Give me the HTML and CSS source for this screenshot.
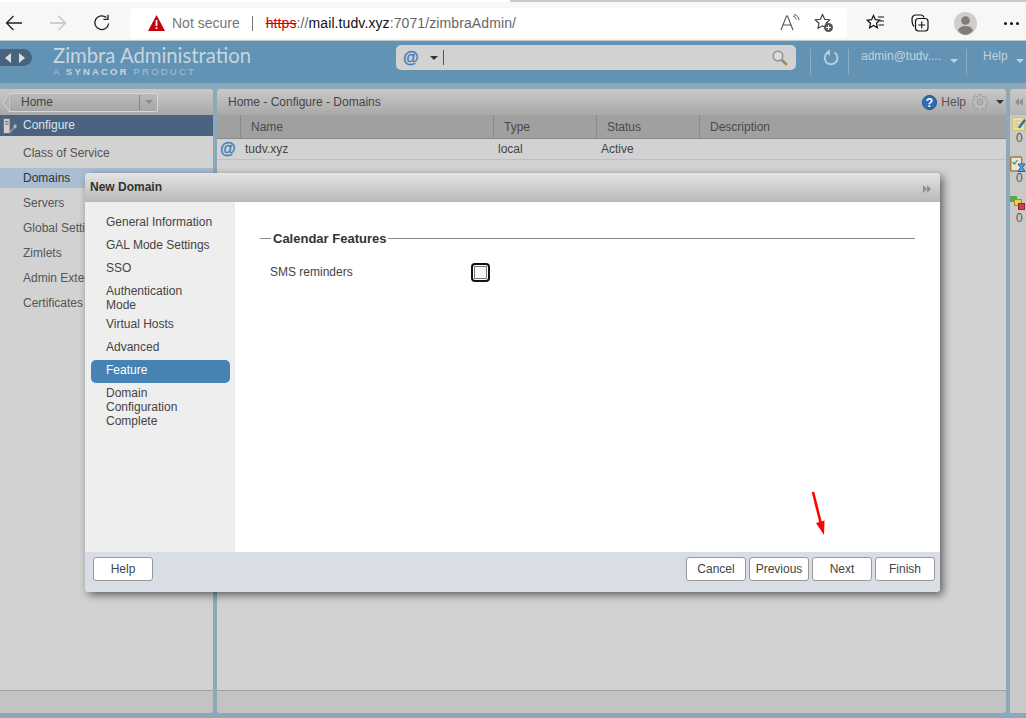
FILE: index.html
```html
<!DOCTYPE html>
<html lang="en">
<head>
<meta charset="utf-8">
<title>Zimbra Administration</title>
<link rel="stylesheet" href="styles.css">
</head>
<body>
<div class="browser">
  <div class="tabstrip"><div class="tabedge"></div></div>
  <div class="toolbar">
    <svg class="tb-icon back" width="18" height="18" viewBox="0 0 18 18"><path d="M17 9H1.5M8.500 2L1.5 9l7 7" fill="none" stroke="#222" stroke-width="1.3"/></svg>
    <svg class="tb-icon fwd" width="18" height="18" viewBox="0 0 18 18"><path d="M1 9h15.500M9.500 2l7 7-7 7" fill="none" stroke="#c4c4c4" stroke-width="1.3"/></svg>
    <svg class="tb-icon reload" width="18" height="18" viewBox="0 0 18 18"><path d="M15.600 9.500A6.900 6.900 0 1 1 13.400 3.600" fill="none" stroke="#222" stroke-width="1.3"/><path d="M15 .8v4.600h-4.600" fill="none" stroke="#222" stroke-width="1.3"/></svg>
    <div class="addr">
      <svg class="warn" width="17" height="16" viewBox="0 0 17 16"><path d="M8.500 0L17 16H0z" fill="#c5000f"/><path d="M7.600 5h1.800v6H7.600zM7.600 12.200h1.800V14H7.600z" fill="#fff"/></svg>
      <span class="notsecure">Not secure</span>
      <span class="addr-sep"></span>
      <span class="url"><span class="proto">https</span><span class="dim">://</span>mail.tudv.xyz<span class="dim">:7071/zimbraAdmin/</span></span>
      <svg class="readaloud" width="22" height="18" viewBox="0 0 22 18"><path d="M2 16L7.500 2h1L14 16M4 11h8" fill="none" stroke="#555" stroke-width="1.100"/><path d="M14 2c2 .6 3 1.800 3 3.500M15 .5c3 .6 5 3 5 5.500" fill="none" stroke="#555" stroke-width="1"/></svg>
      <svg class="addfav" width="20" height="20" viewBox="0 0 20 20"><path d="M8.500 1.500l2.200 4.700 5 .6-3.700 3.500 1 5-4.500-2.500-4.500 2.500 1-5L1.300 6.800l5-.6z" fill="none" stroke="#333" stroke-width="1.100"/><circle cx="14.500" cy="14.500" r="4.500" fill="#555"/><path d="M12 14.500h5M14.500 12v5" stroke="#fff" stroke-width="1.100"/></svg>
    </div>
    <svg class="favs" width="20" height="18" viewBox="0 0 20 18"><path d="M7.500 1.500l1.900 4.200 4.400.5-3.300 3 .9 4.500-3.900-2.300-3.900 2.300.9-4.500-3.300-3 4.400-.5z" fill="none" stroke="#111" stroke-width="1.200"/><path d="M12 3h6M14 7h4M12.500 11h5.500" stroke="#111" stroke-width="1.100"/></svg>
    <svg class="colls" width="18" height="18" viewBox="0 0 18 18"><rect x="4.500" y="4.500" width="12.500" height="12.500" rx="3" fill="none" stroke="#111" stroke-width="1.200"/><path d="M10.700 7.500v7M7.200 11h7" stroke="#111" stroke-width="1.100"/><path d="M3 12.500C1.500 11 1 9.500 1 5c0-2 1-4 4-4h5c1.500 0 2.500.8 3 2.500" fill="none" stroke="#111" stroke-width="1.200"/></svg>
    <svg class="avatar" width="23" height="23" viewBox="0 0 23 23"><circle cx="11.500" cy="11.500" r="11.500" fill="#d0cdca"/><circle cx="11.500" cy="8.500" r="4.300" fill="#807d7a"/><path d="M4 18.500c1-3.200 3.600-4.500 7.500-4.500s6.500 1.300 7.500 4.500A11 11 0 0 1 11.500 23 11 11 0 0 1 4 18.500z" fill="#807d7a"/></svg>
    <span class="dots"><i></i><i></i><i></i></span>
  </div>
</div>

<div class="app">
  <header class="apphead">
    <div class="navpill"><span class="tri-l"></span><span class="tri-r"></span></div>
    <div class="brand">
      <div class="brand-main">Zimbra Administration</div>
      <div class="brand-sub">A <b>SYNACOR</b> PRODUCT</div>
    </div>
    <div class="search">
      <span class="at search-at">@</span>
      <span class="caret dark search-caret"></span>
      <span class="search-sep"></span>
      <svg class="lens" width="16" height="16" viewBox="0 0 16 16"><circle cx="6" cy="6" r="4.800" fill="#dcdcdc" stroke="#87949a" stroke-width="1.500"/><path d="M9.800 9.800l5 5" stroke="#a98443" stroke-width="2.600"/></svg>
    </div>
    <span class="hsep sep1"></span>
    <svg class="refresh" width="16" height="17" viewBox="0 0 16 17"><path d="M4.300 3.800A6.400 6.400 0 1 0 11.400 3.500" fill="none" stroke="#b8cfdc" stroke-width="2"/><path d="M7 .3v6.400L2.600 3.400z" fill="#b8cfdc"/></svg>
    <span class="hsep sep2"></span>
    <span class="user">admin@tudv....</span>
    <span class="caret light user-caret"></span>
    <span class="hsep sep3"></span>
    <span class="headhelp">Help</span>
    <span class="caret light help-caret"></span>
  </header>

  <div class="panels">
    <aside class="side">
      <div class="panelhead">
        <div class="homebtn">
          <svg class="hometip" width="8" height="19" viewBox="0 0 8 19"><path d="M8 .5H7L1 9.500 7 18.500h1z" fill="#b4b4b4" stroke="#d6d6d6"/></svg>
          <span class="homelabel">Home</span><span class="homedrop"><span class="caret gray"></span></span>
        </div>
      </div>
      <div class="section">
        <svg class="cfg-icon" width="18" height="17" viewBox="0 0 18 17"><rect x="3.500" y="1.500" width="6.500" height="15" fill="#cfcfcf" stroke="#6f6f6f"/><path d="M5 4.500h3.500M5 7h3.500" stroke="#666"/><path d="M9 15.500l4.500-5 .3-2.500 2.700-1-.7 2.200 1.200.4-1.700 1.800-1.500-.3-3.500 4.800z" fill="#c4c4c4" stroke="#8b8b8b" stroke-width=".7"/></svg>
        <span>Configure</span>
      </div>
      <ul class="sidelist">
        <li>Class of Service</li>
        <li class="on">Domains</li>
        <li>Servers</li>
        <li>Global Settings</li>
        <li>Zimlets</li>
        <li>Admin Extensions</li>
        <li>Certificates</li>
      </ul>
      <div class="panelfoot"></div>
    </aside>

    <main class="content">
      <div class="panelhead crumbs">
        <span class="crumbtext">Home - Configure - Domains</span>
        <svg class="qmark" width="15" height="15" viewBox="0 0 15 15"><circle cx="7.500" cy="7.500" r="7" fill="#2e6db0" stroke="#1d4f8c"/><text x="7.500" y="11.500" class="qtext" text-anchor="middle">?</text></svg>
        <span class="crumbhelp">Help</span>
        <svg class="gear" width="16" height="16" viewBox="0 0 16 16"><path d="M6.800 .5h2.400l.4 2 1.500.6 1.700-1.100 1.700 1.700-1.100 1.700.6 1.500 2 .4v2.400l-2 .4-.6 1.500 1.100 1.700-1.700 1.700-1.700-1.100-1.500.6-.4 2H6.800l-.4-2-1.500-.6-1.700 1.100-1.700-1.700 1.100-1.700-.6-1.500-2-.4V6.800l2-.4.6-1.500L1.500 3.200l1.700-1.700 1.700 1.100 1.500-.6z" fill="#bdbdbd" stroke="#9d9d9d"/><circle cx="8" cy="8" r="3" fill="#b0b0b0" stroke="#9a9a9a"/></svg>
        <span class="caret dark crumb-caret"></span>
      </div>
      <div class="thead">
        <span class="col c0"></span>
        <span class="col c1">Name</span>
        <span class="col c2">Type</span>
        <span class="col c3">Status</span>
        <span class="col c4">Description</span>
      </div>
      <div class="trow">
        <span class="cell c0"><span class="at row-at">@</span></span>
        <span class="cell c1">tudv.xyz</span>
        <span class="cell c2">local</span>
        <span class="cell c3">Active</span>
      </div>
      <div class="content-fill"></div>
      <div class="panelfoot"></div>
    </main>

    <aside class="mini">
      <div class="minihead"><span class="tri-l gray"></span><span class="tri-l gray"></span></div>
      <div class="ministat">
        <svg width="16" height="16" viewBox="0 0 16 16"><rect x="2.500" y="1.500" width="12" height="13" fill="#e8e1a2" stroke="#c9c27d"/><path d="M4 5h7M4 8h5M4 11h5" stroke="#c6bf85"/><path d="M8 11l6-8 2 1.500-6 8z" fill="#3b6ea8"/></svg>
        <span>0</span>
      </div>
      <div class="ministat">
        <svg width="16" height="16" viewBox="0 0 16 16"><rect x="0.700" y="1" width="11" height="14" rx="1" fill="#e5e5e5" stroke="#a77a3a" stroke-width="1.400"/><path d="M2.500 6l2 2 3-4" fill="none" stroke="#3a9a3a" stroke-width="1.200"/><path d="M8 8h7l-2.500 3.500L15 15.500H8l2.500-4z" fill="#5ea0d8" stroke="#2a5f94"/></svg>
        <span>0</span>
      </div>
      <div class="ministat">
        <svg width="16" height="16" viewBox="0 0 16 16"><rect x="0" y="0" width="7" height="6" fill="#55a64e"/><rect x="4.500" y="3.500" width="7" height="6" fill="#e4d04f" stroke="#a68f27"/><rect x="8.500" y="7.500" width="6" height="6" fill="#cf3f3f" stroke="#962727"/></svg>
        <span>0</span>
      </div>
    </aside>
  </div>
</div>

<section class="dialog">
  <div class="dlg-title">
    <span>New Domain</span>
    <span class="dlg-arrows"><span class="tri-r gray"></span><span class="tri-r gray"></span></span>
  </div>
  <div class="dlg-body">
    <nav class="dlg-nav">
      <div class="navitem">General Information</div>
      <div class="navitem">GAL Mode Settings</div>
      <div class="navitem">SSO</div>
      <div class="navitem">Authentication Mode</div>
      <div class="navitem">Virtual Hosts</div>
      <div class="navitem">Advanced</div>
      <div class="navitem active">Feature</div>
      <div class="navitem">Domain Configuration Complete</div>
    </nav>
    <div class="dlg-main">
      <div class="legend"><span class="legend-dash"></span><span class="legend-text">Calendar Features</span><span class="legend-line"></span></div>
      <div class="field">
        <label class="field-label">SMS reminders</label>
        <span class="check"></span>
      </div>
    </div>
  </div>
  <div class="dlg-foot">
    <button class="btn">Help</button>
    <div class="btn-group">
      <button class="btn">Cancel</button>
      <button class="btn">Previous</button>
      <button class="btn">Next</button>
      <button class="btn">Finish</button>
    </div>
  </div>
</section>

<svg class="redarrow" width="16" height="46" viewBox="0 0 16 46"><path d="M2 1l8 32" stroke="#f00" stroke-width="2.600" fill="none"/><path d="M5 32l8.500-2.500L13 44z" fill="#f00"/></svg>
</body>
</html>
```
FILE: styles.css
```css
* { box-sizing: border-box; }
html, body { margin: 0; padding: 0; height: 100%; overflow: hidden; }
body {
  font-family: "Liberation Sans", Arial, sans-serif;
  font-size: 12px;
  color: #444;
  display: flex;
  flex-direction: column;
  width: 1026px;
  height: 718px;
  background: #8ba9b7;
}

/* browser chrome */
.browser { height: 41px; background: #f7f7f7; border-bottom: 1px solid #c8c8c8; flex: none; }
.tabstrip { height: 2px; background: #fff; }
.tabedge { margin-left: 510px; height: 2px; background: #c9c9c9; }
.toolbar { display: flex; align-items: center; height: 34px; margin-top: 4px; padding-left: 5px; }
.tb-icon { flex: none; }
.fwd { margin-left: 26px; }
.reload { margin-left: 26px; }
.addr {
  margin-left: 19px; width: 717px; height: 30px; background: #fff; border-radius: 4px;
  display: flex; align-items: center; padding-left: 18px; flex: none;
}
.notsecure { margin-left: 7px; font-size: 14px; color: #777; }
.addr-sep { width: 1px; height: 15px; background: #777; margin: 0 13px 0 12px; }
.url { font-size: 14px; color: #111; letter-spacing: .1px; }
.proto { color: #c00; text-decoration: line-through; }
.dim { color: #666; }
.readaloud { margin-left: auto; }
.addfav { margin: 0 13px 0 13px; }
.favs { margin-left: 19px; }
.colls { margin-left: 25px; }
.avatar { margin-left: 25px; }
.dots { display: flex; gap: 3px; margin-left: 27px; }
.dots i { width: 3px; height: 3px; background: #111; border-radius: 50%; display: block; }

/* app */
.app { flex: 1; display: flex; flex-direction: column; min-height: 0; }
.apphead { height: 42px; background: #6292b4; flex: none; display: flex; align-items: flex-start; }
.navpill {
  width: 32px; height: 17px; margin-top: 8px; background: #47637e; border-radius: 0 9px 9px 0;
  display: flex; align-items: center; justify-content: center; gap: 8px; flex: none; padding-right: 2px;
}
.tri-l, .tri-r { display: inline-block; width: 0; height: 0; border-top: 5px solid transparent; border-bottom: 5px solid transparent; }
.tri-l { border-right: 6px solid #ddd; }
.tri-r { border-left: 6px solid #ddd; }
.tri-l.gray { border-right-color: #8f8f8f; border-top-width: 4px; border-bottom-width: 4px; border-right-width: 4px; }
.tri-r.gray { border-left-color: #8f8f8f; border-top-width: 4px; border-bottom-width: 4px; border-left-width: 4px; }
.brand { margin-left: 21px; margin-top: 2px; width: 343px; flex: none; color: #bfd2de; }
.brand-main { font-family: Lato, sans-serif; font-size: 20.300px; line-height: 25px; color: #c6d6e0; }
.brand-sub { font-size: 9.500px; line-height: 10px; letter-spacing: 2.200px; color: #a9c2d2; margin-top: -1px; }
.brand-sub b { color: #c6d6e0; }
.search {
  width: 400px; height: 25px; margin-top: 4px; background: #d2d2d2; border-radius: 5px; flex: none;
  display: flex; align-items: center; padding-left: 7px; padding-right: 8px;
}
.at { font-family: "Liberation Sans", sans-serif; font-weight: bold; color: #3f7fbd; -webkit-text-stroke: .3px #3f7fbd; }
.search-at { font-size: 16px; }
.caret { display: inline-block; width: 0; height: 0; border-left: 4px solid transparent; border-right: 4px solid transparent; border-top: 4px solid #333; }
.caret.light { border-top-color: #c0d2de; }
.caret.gray { border-top-color: #8a8a8a; }
.caret.dark { border-top-color: #333; }
.search-caret { margin-left: 11px; }
.search-sep { width: 1px; height: 15px; background: #555; margin-left: 5px; }
.lens { margin-left: auto; }
.hsep { width: 1px; height: 26px; background: #8aaec6; margin-top: 8px; flex: none; }
.sep1 { margin-left: 14px; }
.refresh { margin: 8px 0 0 12px; flex: none; }
.sep2 { margin-left: 9px; }
.user { margin: 8px 0 0 12px; width: 81px; color: #c0d2de; white-space: nowrap; flex: none; line-height: 14px; }
.user-caret { margin: 18px 0 0 8px; flex: none; }
.sep3 { margin-left: 8px; }
.headhelp { margin: 8px 0 0 16px; color: #c0d2de; line-height: 14px; flex: none; }
.help-caret { margin: 18px 0 0 8px; flex: none; }

/* panels */
.panels { flex: 1; display: flex; gap: 4px; padding: 6px 0 5px 0; min-height: 0; }
.side, .content, .mini { display: flex; flex-direction: column; background: #d2d2d2; border-radius: 0 4px 4px 0; flex: none; overflow: hidden; }
.side { width: 213px; }
.content { width: 789px; border-radius: 4px; }
.mini { width: 16px; border-radius: 4px 0 0 0; background: #c9c9c9; }
.panelhead { height: 26px; flex: none; background: linear-gradient(#c9c9c9, #a8a8a8); display: flex; align-items: center; }
.panelfoot { height: 23px; flex: none; background: #c3c3c3; border-top: 1px solid #a0a0a0; margin-top: auto; }

.homebtn {
  margin-left: 10px; width: 148px; height: 19px; display: flex; position: relative;
  background: linear-gradient(#bababa, #a7a7a7); border: 1px solid #d6d6d6; border-left: 0; border-radius: 0 2px 2px 0;
}
.hometip { position: absolute; left: -8px; top: -1px; }
.homelabel { flex: 1; padding-left: 11px; line-height: 17px; color: #444; }
.homedrop { width: 18px; border-left: 1px solid #888; display: flex; align-items: center; justify-content: center; margin: 1px 0; }
.section { height: 21px; flex: none; background: #4a6380; color: #dde4ea; display: flex; align-items: center; gap: 5px; padding: 0 0 1px 0; }
.sidelist { list-style: none; margin: 0; padding: 5px 0 0; overflow: hidden; }
.sidelist li { height: 25px; line-height: 24px; padding-left: 23px; color: #555; white-space: nowrap; }
.sidelist li.on { background: #a9bdd3; color: #333; height: 20px; line-height: 20px; margin: 2px 0 3px; }

.crumbs { padding-left: 11px; padding-right: 2px; }
.crumbtext { margin-right: auto; color: #444; }
.qmark { margin-right: 4px; }
.qtext { font-family: "Liberation Sans", sans-serif; font-size: 12px; font-weight: bold; fill: #fff; }
.crumbhelp { color: #555; margin-right: 6px; }
.gear { margin-right: 8px; }

.thead { display: flex; height: 24px; flex: none; background: #a0a0a0; border-bottom: 1px solid #8a8a8a; }
.col { line-height: 24px; padding-left: 10px; border-left: 1px solid #8a8a8a; color: #4a4a4a; }
.thead .c0 { border-left: 0; }
.trow { display: flex; height: 21px; flex: none; border-bottom: 1px solid #bfbfbf; }
.cell { line-height: 20px; padding-left: 5px; color: #444; }
.c0 { width: 23px; }
.c1 { width: 253px; }
.c2 { width: 103px; }
.c3 { width: 103px; }
.c4 { flex: 1; }
.trow .c0 { padding-left: 3px; }
.row-at { font-size: 16px; }
.content-fill { flex: 1; }

.minihead { height: 26px; flex: none; display: flex; align-items: center; background: linear-gradient(#c9c9c9,#b5b5b5); padding-left: 5px; }
.ministat { height: 40px; flex: none; display: flex; flex-direction: column; padding-top: 1px; color: #555; line-height: 14px; }
.ministat svg { flex: none; }
.ministat span { margin: -1px 0 0 6px; }

/* dialog */
.dialog {
  position: absolute; left: 85px; top: 173px; width: 855px; height: 419px;
  background: #fff; border-radius: 4px; box-shadow: 3px 3px 8px rgba(0,0,0,.55);
  display: flex; flex-direction: column;
}
.dlg-title {
  height: 29px; flex: none; background: linear-gradient(#e4e4e4, #b8b8b8); border-radius: 4px 4px 0 0;
  display: flex; align-items: center; justify-content: space-between; padding: 0 9px 2px 5px; font-weight: bold; color: #333;
}
.dlg-arrows { display: flex; margin-top: 4px; }
.dlg-body { flex: 1; display: flex; min-height: 0; }
.dlg-nav { width: 150px; flex: none; background: #eee; padding: 10px 5px 0 6px; color: #444; }
.navitem { min-height: 23px; padding: 3px 16px 2px 15px; line-height: 14px; border-radius: 5px; }
.navitem.active { background: #4682b4; color: #fff; }
.dlg-main { flex: 1; padding: 29px 25px 0; }
.legend { display: flex; align-items: center; height: 14px; }
.legend-dash { width: 11px; height: 1px; background: #888; }
.legend-text { margin: 0 2px; font-size: 13px; font-weight: bold; color: #333; white-space: nowrap; }
.legend-line { flex: 1; height: 1px; background: #888; }
.field { display: flex; align-items: center; margin-top: 17px; padding-left: 10px; height: 20px; }
.field-label { width: 201px; color: #444; }
.check {
  width: 19px; height: 19px; border: 2px solid #111; border-radius: 4px; background: #f8f8f8;
  box-shadow: inset 0 0 0 1px #fff, inset 0 0 0 2px #777;
}
.dlg-foot {
  height: 40px; flex: none; background: #d9dee6; border-radius: 0 0 4px 4px;
  display: flex; align-items: flex-start; justify-content: space-between; padding: 5px 5px 0 8px;
}
.btn-group { display: flex; gap: 3px; }
.btn {
  width: 60px; height: 24px; background: #fff; border: 1px solid #999; border-radius: 3px;
  font-family: "Liberation Sans", Arial, sans-serif; font-size: 12px; color: #444; padding: 0;
}
.redarrow { position: absolute; left: 811px; top: 491px; }
```
